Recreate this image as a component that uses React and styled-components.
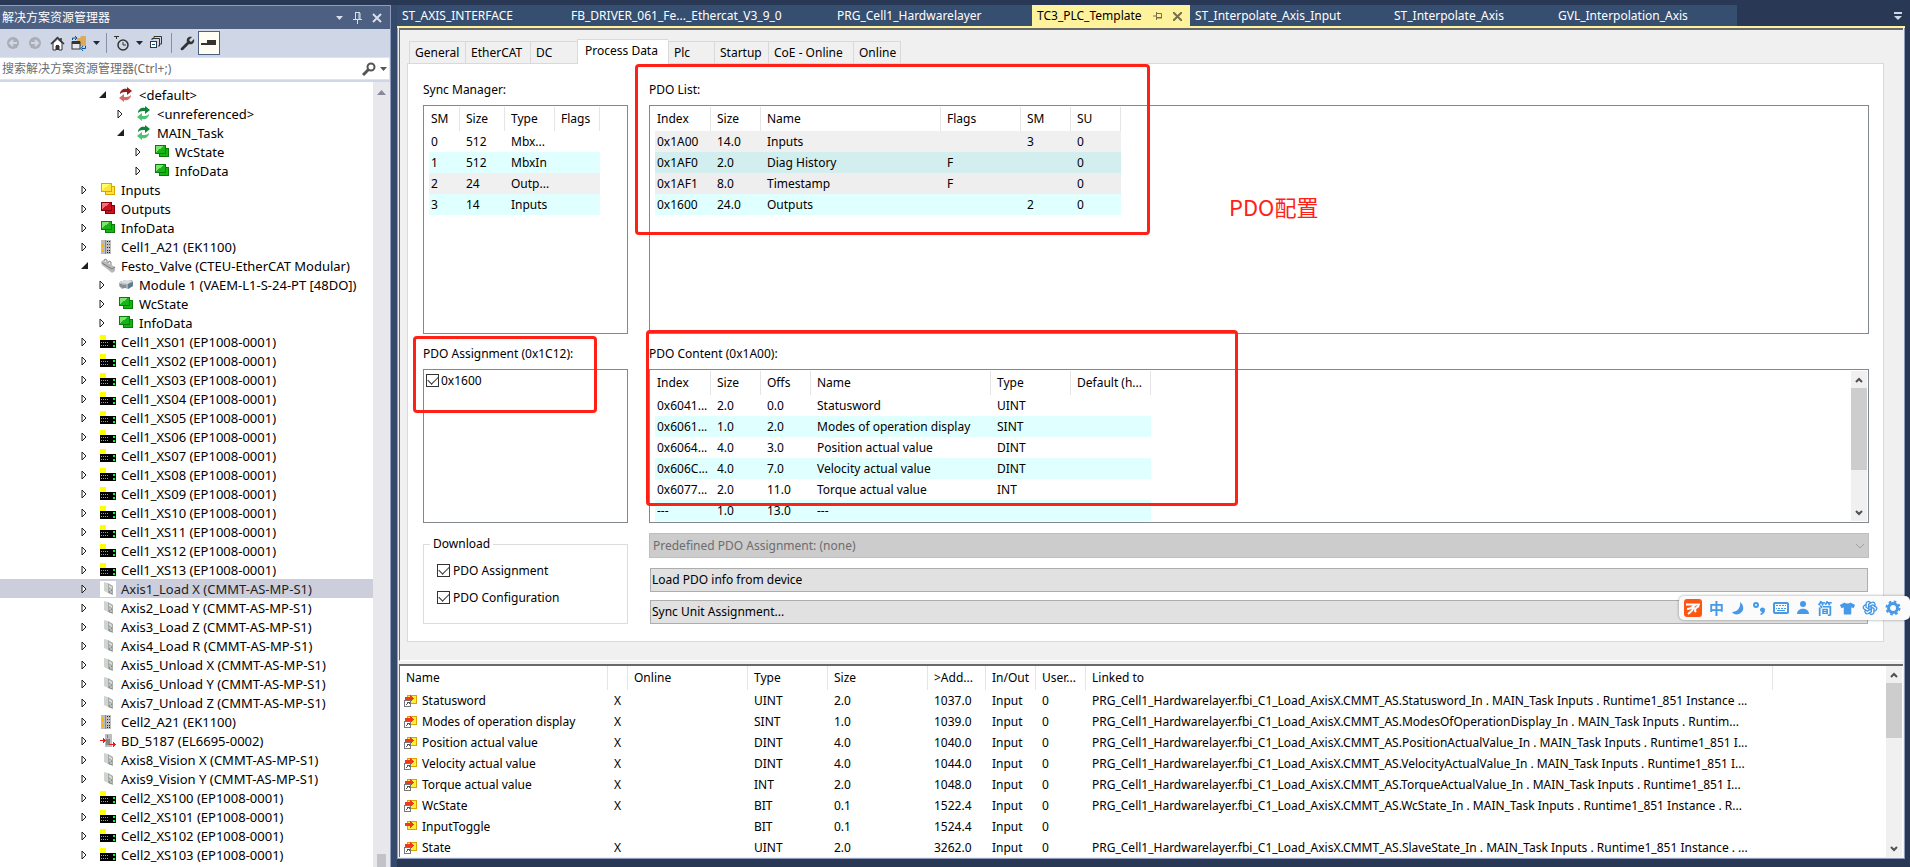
import React from "react";
import styled, { createGlobalStyle, css } from "styled-components";
import { FaTshirt } from "react-icons/fa";
import { TbBrandOpenai } from "react-icons/tb";

const tree = [
  { level: 1, icon: "taskRed", text: "<default>", open: true },
  { level: 2, icon: "taskGreen", text: "<unreferenced>" },
  { level: 2, icon: "taskGreen", text: "MAIN_Task", open: true },
  { level: 3, icon: "green", text: "WcState" },
  { level: 3, icon: "green", text: "InfoData" },
  { level: 0, icon: "yellow", text: "Inputs" },
  { level: 0, icon: "red", text: "Outputs" },
  { level: 0, icon: "green", text: "InfoData" },
  { level: 0, icon: "coupler", text: "Cell1_A21 (EK1100)" },
  { level: 0, icon: "valve", text: "Festo_Valve (CTEU-EtherCAT Modular)", open: true },
  { level: 1, icon: "module", text: "Module 1 (VAEM-L1-S-24-PT [48DO])" },
  { level: 1, icon: "green", text: "WcState" },
  { level: 1, icon: "green", text: "InfoData" },
  { level: 0, icon: "box", text: "Cell1_XS01 (EP1008-0001)" },
  { level: 0, icon: "box", text: "Cell1_XS02 (EP1008-0001)" },
  { level: 0, icon: "box", text: "Cell1_XS03 (EP1008-0001)" },
  { level: 0, icon: "box", text: "Cell1_XS04 (EP1008-0001)" },
  { level: 0, icon: "box", text: "Cell1_XS05 (EP1008-0001)" },
  { level: 0, icon: "box", text: "Cell1_XS06 (EP1008-0001)" },
  { level: 0, icon: "box", text: "Cell1_XS07 (EP1008-0001)" },
  { level: 0, icon: "box", text: "Cell1_XS08 (EP1008-0001)" },
  { level: 0, icon: "box", text: "Cell1_XS09 (EP1008-0001)" },
  { level: 0, icon: "box", text: "Cell1_XS10 (EP1008-0001)" },
  { level: 0, icon: "box", text: "Cell1_XS11 (EP1008-0001)" },
  { level: 0, icon: "box", text: "Cell1_XS12 (EP1008-0001)" },
  { level: 0, icon: "box", text: "Cell1_XS13 (EP1008-0001)" },
  { level: 0, icon: "drive", text: "Axis1_Load X (CMMT-AS-MP-S1)", selected: true },
  { level: 0, icon: "drive", text: "Axis2_Load Y (CMMT-AS-MP-S1)" },
  { level: 0, icon: "drive", text: "Axis3_Load Z (CMMT-AS-MP-S1)" },
  { level: 0, icon: "drive", text: "Axis4_Load R (CMMT-AS-MP-S1)" },
  { level: 0, icon: "drive", text: "Axis5_Unload X (CMMT-AS-MP-S1)" },
  { level: 0, icon: "drive", text: "Axis6_Unload Y (CMMT-AS-MP-S1)" },
  { level: 0, icon: "drive", text: "Axis7_Unload Z (CMMT-AS-MP-S1)" },
  { level: 0, icon: "coupler", text: "Cell2_A21 (EK1100)" },
  { level: 0, icon: "bridge", text: "BD_5187 (EL6695-0002)" },
  { level: 0, icon: "drive", text: "Axis8_Vision X (CMMT-AS-MP-S1)" },
  { level: 0, icon: "drive", text: "Axis9_Vision Y (CMMT-AS-MP-S1)" },
  { level: 0, icon: "box", text: "Cell2_XS100 (EP1008-0001)" },
  { level: 0, icon: "box", text: "Cell2_XS101 (EP1008-0001)" },
  { level: 0, icon: "box", text: "Cell2_XS102 (EP1008-0001)" },
  { level: 0, icon: "box", text: "Cell2_XS103 (EP1008-0001)" },
];

const docTabs = [
  { text: "ST_AXIS_INTERFACE", width: 169 },
  { text: "FB_DRIVER_061_Fe..._Ethercat_V3_9_0", width: 266 },
  { text: "PRG_Cell1_Hardwarelayer", width: 200 },
  { text: "TC3_PLC_Template", width: 158, active: true },
  { text: "ST_Interpolate_Axis_Input", width: 199 },
  { text: "ST_Interpolate_Axis", width: 164 },
  { text: "GVL_Interpolation_Axis", width: 184 },
];

const pageTabs = [
  { text: "General", width: 56 },
  { text: "EtherCAT", width: 65 },
  { text: "DC", width: 47 },
  { text: "Process Data", width: 91, active: true },
  { text: "Plc", width: 46 },
  { text: "Startup", width: 54 },
  { text: "CoE - Online", width: 85 },
  { text: "Online", width: 48 },
];

const syncManager = {
  widths: [31, 45, 50, 45],
  head: ["SM", "Size", "Type", "Flags"],
  rows: [
    { cells: ["0", "512", "Mbx...", ""] },
    { tone: "#e0ffff", cells: ["1", "512", "MbxIn", ""] },
    { tone: "#f0f0f0", cells: ["2", "24", "Outp...", ""] },
    { tone: "#e0ffff", cells: ["3", "14", "Inputs", ""] },
  ],
};

const pdoList = {
  widths: [56, 50, 180, 80, 50, 50],
  head: ["Index", "Size", "Name", "Flags", "SM", "SU"],
  rows: [
    { tone: "#f0f0f0", cells: ["0x1A00", "14.0", "Inputs", "", "3", "0"] },
    { tone: "#d2eeee", cells: ["0x1AF0", "2.0", "Diag History", "F", "", "0"] },
    { tone: "#eeeeee", cells: ["0x1AF1", "8.0", "Timestamp", "F", "", "0"] },
    { tone: "#e0ffff", cells: ["0x1600", "24.0", "Outputs", "", "2", "0"] },
  ],
};

const pdoContent = {
  widths: [56, 50, 50, 180, 80, 80],
  head: ["Index", "Size", "Offs", "Name", "Type", "Default (h..."],
  rows: [
    { cells: ["0x6041...", "2.0", "0.0", "Statusword", "UINT", ""] },
    { tone: "#e0ffff", cells: ["0x6061...", "1.0", "2.0", "Modes of operation display", "SINT", ""] },
    { cells: ["0x6064...", "4.0", "3.0", "Position actual value", "DINT", ""] },
    { tone: "#e0ffff", cells: ["0x606C...", "4.0", "7.0", "Velocity actual value", "DINT", ""] },
    { cells: ["0x6077...", "2.0", "11.0", "Torque actual value", "INT", ""] },
    { tone: "#e0ffff", cells: ["---", "1.0", "13.0", "---", "", ""] },
  ],
};

const link = "PRG_Cell1_Hardwarelayer.fbi_C1_Load_AxisX.CMMT_AS.";

const variables = {
  widths: [208, 20, 120, 80, 100, 58, 50, 50, 687],
  head: ["Name", "", "Online", "Type", "Size", ">Add...", "In/Out", "User...", "Linked to"],
  rows: [
    ["Statusword", "X", "", "UINT", "2.0", "1037.0", "Input", "0", link + "Statusword_In . MAIN_Task Inputs . Runtime1_851 Instance ..."],
    ["Modes of operation display", "X", "", "SINT", "1.0", "1039.0", "Input", "0", link + "ModesOfOperationDisplay_In . MAIN_Task Inputs . Runtim..."],
    ["Position actual value", "X", "", "DINT", "4.0", "1040.0", "Input", "0", link + "PositionActualValue_In . MAIN_Task Inputs . Runtime1_851 I..."],
    ["Velocity actual value", "X", "", "DINT", "4.0", "1044.0", "Input", "0", link + "VelocityActualValue_In . MAIN_Task Inputs . Runtime1_851 I..."],
    ["Torque actual value", "X", "", "INT", "2.0", "1048.0", "Input", "0", link + "TorqueActualValue_In . MAIN_Task Inputs . Runtime1_851 I..."],
    ["WcState", "X", "", "BIT", "0.1", "1522.4", "Input", "0", link + "WcState_In . MAIN_Task Inputs . Runtime1_851 Instance . R..."],
    ["InputToggle", "", "", "BIT", "0.1", "1524.4", "Input", "0", ""],
    ["State", "X", "", "UINT", "2.0", "3262.0", "Input", "0", link + "SlaveState_In . MAIN_Task Inputs . Runtime1_851 Instance . ..."],
  ].map((cells) => ({ cells, linked: cells[1] === "X" })),
};

const imageColors = {
  green: ["#7ee36f", "#16b516", "#0a7a0a"],
  yellow: ["#ffff66", "#ffe23c", "#d9a800"],
  red: ["#f2707a", "#cc1020", "#86000c"],
};

function ImageIcon({ kind }) {
  const [light, fill, line] = imageColors[kind];
  return (
    <svg width="16" height="16" viewBox="0 0 16 16" shapeRendering="crispEdges">
      <rect x="5.500" y="4.500" width="9" height="8" fill={fill} stroke={line} />
      <rect x="1.500" y="1.500" width="10" height="8" fill={fill} stroke={line} />
      <path d="M2 2h8l-8 6z" fill={light} />
    </svg>
  );
}

function TaskIcon({ kind }) {
  const red = kind === "taskRed";
  const dark = red ? "#8e2222" : "#14813a";
  const light = red ? "#d96a6a" : "#4cc274";
  return (
    <svg width="16" height="16" viewBox="0 0 16 16">
      <path d="M2 7c0-4 4-6 7-5V0l5 4-5 4V5C7 5 4 5 2 7z" fill={dark} />
      <path d="M13 8c0 4-4 6-7 5v2l-5-4 5-4v3c3 0 5 0 7-2z" fill={light} />
    </svg>
  );
}

function NodeIcon({ kind }) {
  if (imageColors[kind]) return <ImageIcon kind={kind} />;
  if (kind === "taskRed" || kind === "taskGreen") return <TaskIcon kind={kind} />;
  if (kind === "coupler")
    return (
      <svg width="16" height="16" viewBox="0 0 16 16" shapeRendering="crispEdges">
        <path d="M1 1h4v14H1zM6 1h5v14H6z" fill="#bdbdbd" />
        <path d="M5 1h1v14H5z" fill="#8a8a8a" />
        <path d="M2 4h2v4H2zM2 10h2v3H2z" fill="#ffb400" />
        <path d="M7 2h1v1H7zM9 2h1v1H9zM7 8h1v1H7zM9 8h1v1H9zM7 11h1v1H7zM9 11h1v1H9zM7 13h1v1H7zM9 13h1v1H9z" fill="#222" />
        <path d="M7 5h1v1H7z" fill="#d00" />
        <path d="M9 5h1v1H9z" fill="#0a0" />
      </svg>
    );
  if (kind === "valve")
    return (
      <svg width="16" height="16" viewBox="0 0 16 16">
        <path d="M1 4l2-2 12 7v4l-3 2L2 7z" fill="#b9b9b9" />
        <path d="M2 5l10 6 3-2" fill="none" stroke="#777" />
        <path d="M4 3l1-2 2 1v3M8 5l1-2 2 1v3" fill="#e3e3e3" stroke="#8a8a8a" />
      </svg>
    );
  if (kind === "module")
    return (
      <svg width="16" height="16" viewBox="0 0 16 16">
        <path d="M1 6l2-2h2l1-1 3 1 5-1 1 2v4l-5 3-3-1-3 1-3-3z" fill="#a9afb3" />
        <path d="M1 6l5-3 8 1-4 3z" fill="#d8dcde" />
        <path d="M10 7l5-2v4l-5 3z" fill="#5e7d8c" />
        <path d="M3 7v3M5 8v3M7 8v3" stroke="#6d6d6d" />
      </svg>
    );
  if (kind === "drive")
    return (
      <svg width="16" height="16" viewBox="0 0 16 16">
        <path d="M4 1l4 1v10l-4-2z" fill="#d0d4d0" />
        <path d="M8 2l5 3v9l-5-2z" fill="#a6aba6" />
        <path d="M9 4l3 2v2L9 6z" fill="#dfe3df" />
        <path d="M9 8l3 1v4l-3-1z" fill="#858a85" />
        <path d="M9 9h2M10 11h2" stroke="#eee" />
      </svg>
    );
  if (kind === "bridge")
    return (
      <svg width="16" height="16" viewBox="0 0 16 16" shapeRendering="crispEdges">
        <path d="M5 1h7v13H5z" fill="#bdbdbd" />
        <path d="M7 2h1v3H7z" fill="#1cc41c" />
        <path d="M6 6h4v6H6z" fill="#858585" />
        <path d="M0 7h3V5l3 2.500L3 10V8H0zM9 11h4V9l3 2.500-3 2.500v-2H9z" fill="#f01818" />
      </svg>
    );
  return (
    <svg width="16" height="16" viewBox="0 0 16 16" shapeRendering="crispEdges">
      <path d="M0 1h6v5H0z" fill="#ffff00" />
      <path d="M0 6h16v8H0z" fill="#000" />
      <path d="M1 8h1v1H1zM3 8h1v1H3zM5 8h1v1H5zM7 8h1v1H7zM1 11h1v1H1zM3 11h1v1H3zM5 11h1v1H5zM7 11h1v1H7z" fill="#35e835" />
      <path d="M13 7h2v2h-2zM13 11h2v2h-2z" fill="#00ff40" />
    </svg>
  );
}

function VariableIcon({ linked }) {
  return (
    <svg width="14" height="14" viewBox="0 0 14 14" shapeRendering="crispEdges">
      <rect x="3.500" y="1.500" width="9" height="8" fill="#ffee3a" stroke="#d9a400" />
      <path d="M1 3h5V1l4 3.500L6 8V6H1z" fill="#ee3a1c" />
      {linked && (
        <g>
          <rect x=".5" y="6.500" width="6" height="6" fill="#fff" stroke="#777" />
          <path d="M2 11l3-3M3 8h2v2" fill="none" stroke="#555" />
        </g>
      )}
    </svg>
  );
}

function Chevron({ up }) {
  return (
    <svg width="8" height="6" viewBox="0 0 8 6">
      <path d={up ? "M1 5l3-3 3 3" : "M1 1l3 3 3-3"} fill="none" stroke="#505050" strokeWidth="2" />
    </svg>
  );
}

function Caret() {
  return (
    <svg width="7" height="4" viewBox="0 0 7 4">
      <path d="M0 0h7L3.500 4z" fill="currentColor" />
    </svg>
  );
}

function SideHeader() {
  return (
    <>
      <SideTitle>
        <h2>解决方案资源管理器</h2>
        <button aria-label="Window position"><Caret /></button>
        <button aria-label="Auto hide">
          <svg width="9" height="12" viewBox="0 0 9 12" fill="none" stroke="currentColor">
            <path d="M2 .5h5M2.500 1v6M6 1v6M7 1v6M0 7.500h9M4.500 8v4" />
          </svg>
        </button>
        <button aria-label="Close">
          <svg width="10" height="10" viewBox="0 0 10 10" fill="none" stroke="currentColor" strokeWidth="2">
            <path d="M1 1l8 8M9 1L1 9" />
          </svg>
        </button>
      </SideTitle>
      <Toolbar>
        <ToolButton aria-label="Back">
          <svg width="14" height="14" viewBox="0 0 14 14">
            <circle cx="7" cy="7" r="6" fill="#a9adb8" />
            <path d="M11 7H4M7 4L4 7l3 3" fill="none" stroke="#cfd6e5" strokeWidth="2" />
          </svg>
        </ToolButton>
        <ToolButton aria-label="Forward">
          <svg width="14" height="14" viewBox="0 0 14 14">
            <circle cx="7" cy="7" r="6" fill="#a9adb8" />
            <path d="M3 7h7M7 4l3 3-3 3" fill="none" stroke="#cfd6e5" strokeWidth="2" />
          </svg>
        </ToolButton>
        <ToolButton aria-label="Home">
          <svg width="15" height="15" viewBox="0 0 15 15">
            <path d="M3 7v7h3v-4h3v4h3V7L7.500 3z" fill="#fff" stroke="#333" />
            <path d="M6 9h3v5H6z" fill="#333" />
            <path d="M1 8l6.500-6.500L14 8M11 2v3" fill="none" stroke="#333" strokeWidth="1.500" />
          </svg>
        </ToolButton>
        <ToolButton aria-label="Sync with active document">
          <svg width="16" height="15" viewBox="0 0 16 15">
            <path d="M6 2h3l1-2h5v10H6z" fill="#dcaa5a" />
            <rect x="1" y="6" width="8" height="7" fill="#e6e9f0" stroke="#333" />
            <path d="M1 5h8v3H1z" fill="#333" />
            <path d="M1.500 4V2H5M4 0l2 2-2 2M14.500 10v2.500H11M12 10l-2 2.500 2 2.500" fill="none" stroke="#00539c" />
          </svg>
        </ToolButton>
        <ToolButton $narrow aria-label="More views"><Caret /></ToolButton>
        <Separator />
        <ToolButton aria-label="Pending changes filter">
          <svg width="16" height="15" viewBox="0 0 16 15" fill="none" stroke="#333">
            <path d="M0 .5h5M2.500 1v2" />
            <circle cx="9" cy="9" r="5" strokeWidth="1.500" />
            <path d="M9 6v3h3" />
          </svg>
        </ToolButton>
        <ToolButton $narrow aria-label="Filter options"><Caret /></ToolButton>
        <ToolButton aria-label="Collapse all">
          <svg width="14" height="14" viewBox="0 0 14 14" fill="none" stroke="#333">
            <path d="M5 2V.5h7.500V8H11M3 4V2.500h7.500V10H9" />
            <rect x="1.500" y="5.500" width="6" height="6" fill="#fff" />
            <path d="M3 8.500h3" stroke="#00539c" />
          </svg>
        </ToolButton>
        <Separator />
        <ToolButton aria-label="Properties">
          <svg width="15" height="15" viewBox="0 0 15 15">
            <path d="M1 12l6-6c-1-3 1-6 5-5L9 4l2 2 3-3c1 4-2 6-5 5l-6 6c-2 1-3-1-2-2z" fill="#333" />
          </svg>
        </ToolButton>
        <ToolButton $pressed aria-label="Preview selected items">
          <svg width="16" height="8" viewBox="0 0 16 8">
            <path d="M0 4h6v2H0zM6 1h9v5H6z" fill="#333" />
          </svg>
        </ToolButton>
      </Toolbar>
      <Search>
        <input type="text" placeholder="搜索解决方案资源管理器(Ctrl+;)" aria-label="搜索解决方案资源管理器" />
        <svg width="14" height="14" viewBox="0 0 14 14" fill="none" stroke="#555">
          <circle cx="9" cy="5" r="3.500" strokeWidth="2" />
          <path d="M7 7l-6 6" strokeWidth="3" />
        </svg>
        <Caret />
      </Search>
    </>
  );
}

function SolutionExplorer() {
  return (
    <Sidebar>
      <SideHeader />
      <TreeArea>
        <Tree>
          {tree.map((node, i) => (
            <TreeRow key={i} $level={node.level} $selected={node.selected}>
              <Twisty>
                {node.open ? (
                  <svg width="7" height="7" viewBox="0 0 7 7"><path d="M7 0v7H0z" fill="#1e1e1e" /></svg>
                ) : (
                  <svg width="6" height="10" viewBox="0 0 6 10"><path d="M1 1l4 4-4 4z" fill="#fff" stroke="#1e1e1e" /></svg>
                )}
              </Twisty>
              <NodeMark $selected={node.selected}><NodeIcon kind={node.icon} /></NodeMark>
              <span>{node.text}</span>
            </TreeRow>
          ))}
        </Tree>
        <TreeScroll>
          <svg width="9" height="5" viewBox="0 0 9 5"><path d="M4.500 0L9 5H0z" fill="#868999" /></svg>
          <i />
        </TreeScroll>
      </TreeArea>
    </Sidebar>
  );
}

function DataTable({ data, label, icons }) {
  return (
    <Table aria-label={label} $wide={icons}>
      <colgroup>
        {data.widths.map((w, i) => (
          <Col key={i} $w={w} />
        ))}
      </colgroup>
      <thead>
        <tr>
          {data.head.map((h, i) => (
            <th key={i} scope="col">{h}</th>
          ))}
        </tr>
      </thead>
      <tbody>
        {data.rows.map((row, i) => (
          <Row key={i} $tone={row.tone}>
            {row.cells.map((c, j) =>
              icons && j === 0 ? (
                <td key={j}><Variable><VariableIcon linked={row.linked} />{c}</Variable></td>
              ) : (
                <td key={j}>{c}</td>
              )
            )}
          </Row>
        ))}
      </tbody>
    </Table>
  );
}

function ScrollBar({ size }) {
  return (
    <Scroll>
      <button aria-label="Scroll up"><Chevron up /></button>
      <Thumb $size={size} />
      <button aria-label="Scroll down"><Chevron /></button>
    </Scroll>
  );
}

function ProcessData() {
  return (
    <Panel>
      <Section>
        <Label>Sync Manager:</Label>
        <ListBox $height={229}>
          <DataTable data={syncManager} label="Sync Manager" />
        </ListBox>
      </Section>
      <Section>
        <Label>PDO List:</Label>
        <ListBox $height={229}>
          <DataTable data={pdoList} label="PDO List" />
        </ListBox>
        <Callout $left={-14} $top={-16} $width={515} $height={171} />
        <Note>PDO配置</Note>
      </Section>
      <Section>
        <Label>PDO Assignment (0x1C12):</Label>
        <ListBox $height={154}>
          <Check $tight>
            <input type="checkbox" defaultChecked />
            0x1600
          </Check>
        </ListBox>
        <Callout $left={-10} $top={-8} $width={184} $height={77} />
      </Section>
      <Section>
        <Label>PDO Content (0x1A00):</Label>
        <ListBox $height={154}>
          <DataTable data={pdoContent} label="PDO Content" />
          <ScrollBar size={82} />
        </ListBox>
        <Callout $left={-3} $top={-14} $width={592} $height={176} />
      </Section>
      <Group>
        <legend>Download</legend>
        <Check>
          <input type="checkbox" defaultChecked />
          PDO Assignment
        </Check>
        <Check>
          <input type="checkbox" defaultChecked />
          PDO Configuration
        </Check>
      </Group>
      <Actions>
        <SelectBox>
          <select disabled aria-label="Predefined PDO Assignment">
            <option>Predefined PDO Assignment: (none)</option>
          </select>
          <svg width="10" height="6" viewBox="0 0 10 6">
            <path d="M1 1l4 4 4-4" fill="none" stroke="#a0a0a0" />
          </svg>
        </SelectBox>
        <WideButton>Load PDO info from device</WideButton>
        <WideButton>Sync Unit Assignment...</WideButton>
      </Actions>
    </Panel>
  );
}

function InputMethodBar() {
  return (
    <ImeBar>
      <svg width="18" height="18" viewBox="0 0 18 18">
        <rect width="18" height="18" rx="3" fill="#ff5512" />
        <path d="M2 5.500h14M11 6c-2 2-5 4-8 4M10 8c-1 3-3 5-6 7M15 7c-4 2-5 4-3 6" fill="none" stroke="#fff" strokeWidth="2" />
      </svg>
      <span>中</span>
      <svg width="14" height="14" viewBox="0 0 14 14">
        <path d="M9 1c5 4 4 10-1 12-3 1-6 0-7-2 5 0 9-4 8-10z" fill="currentColor" />
      </svg>
      <svg width="14" height="14" viewBox="0 0 14 14">
        <circle cx="4" cy="4" r="2" fill="none" stroke="currentColor" strokeWidth="2" />
        <path d="M8 9a2 2 0 1 1 5 0c0 3-2 4-4 5l-1-1c1-1 2-1 2-2-1 0-2-1-2-2z" fill="currentColor" />
      </svg>
      <svg width="16" height="14" viewBox="0 0 16 14">
        <rect x="1" y="2" width="14" height="10" rx="1" fill="none" stroke="currentColor" strokeWidth="2" />
        <path d="M3 4.500h2M6 4.500h2M9 4.500h2M12 4.500h1M3 7.500h1M5 7.500h2M8 7.500h2M11 7.500h2M4 9.500h8" stroke="currentColor" />
      </svg>
      <svg width="14" height="14" viewBox="0 0 14 14" fill="currentColor">
        <circle cx="7" cy="3" r="3" />
        <path d="M1 13c0-7 12-7 12 0z" />
      </svg>
      <span>简</span>
      <FaTshirt size={15} />
      <TbBrandOpenai size={16} />
      <svg width="16" height="16" viewBox="0 0 16 16" fill="none" stroke="currentColor">
        <circle cx="8" cy="8" r="4.500" strokeWidth="3" />
        <circle cx="8" cy="8" r="6.500" strokeWidth="2" strokeDasharray="2.600 2.500" />
      </svg>
    </ImeBar>
  );
}

function App() {
  return (
    <Page>
      <GlobalStyle />
      <SolutionExplorer />
      <Main>
        <DocTabs>
          {docTabs.map((t) => (
            <DocTab key={t.text} $width={t.width} $active={t.active}>
              {t.text}
              {t.active && (
                <>
                  <svg width="9" height="8" viewBox="0 0 9 8" fill="none" stroke="currentColor">
                    <path d="M0 4h3M3.500 0v8M4 1.500h4.500v4M4 5.500h5M4 6h5" />
                  </svg>
                  <svg width="9" height="9" viewBox="0 0 9 9" fill="none" stroke="currentColor" strokeWidth="2">
                    <path d="M0 0l9 9M9 0L0 9" />
                  </svg>
                </>
              )}
            </DocTab>
          ))}
          <TabMenu aria-label="Open documents">
            <svg width="8" height="8" viewBox="0 0 8 8"><path d="M0 0h8v2H0zM0 4h8L4 8z" fill="currentColor" /></svg>
          </TabMenu>
        </DocTabs>
        <Document>
          <Upper>
            <PageTabs>
              {pageTabs.map((t) => (
                <PageTab key={t.text} $width={t.width} $active={t.active}>{t.text}</PageTab>
              ))}
            </PageTabs>
            <ProcessData />
          </Upper>
          <Lower>
            <DataTable data={variables} label="Variables" icons />
            <ScrollBar size={55} />
          </Lower>
        </Document>
      </Main>
      <InputMethodBar />
    </Page>
  );
}

const GlobalStyle = createGlobalStyle`
  * {
    box-sizing: border-box;
  }
  body {
    margin: 0;
    background: #293955;
    color: #000;
    font-family: "Noto Sans", "Noto Sans CJK SC", sans-serif;
    font-size: 12px;
    line-height: 16px;
  }
  button, input, select {
    font: inherit;
    color: inherit;
  }
  button {
    padding: 0;
    border: 0;
    background: none;
  }
`;

const Page = styled.div`
  display: flex;
  height: 100vh;
  padding-top: 5px;
  overflow: hidden;
  background: #293955;
`;

const Sidebar = styled.aside`
  flex: 0 0 391px;
  display: flex;
  flex-direction: column;
  background: #cfd6e5;
  border-top: 1px solid #8e9bbc;
  border-right: 1px solid #8e9bbc;
`;

const SideTitle = styled.div`
  display: flex;
  align-items: center;
  height: 23px;
  padding: 0 8px 0 2px;
  gap: 10px;
  background: #4d6082;
  color: #fff;
  h2 {
    flex: 1;
    margin: 0;
    font-size: 12px;
    font-weight: 400;
  }
  button {
    display: flex;
    color: #d8deea;
  }
`;

const Toolbar = styled.div`
  display: flex;
  align-items: center;
  height: 28px;
  padding-left: 2px;
`;

const ToolButton = styled.button`
  display: flex;
  align-items: center;
  justify-content: center;
  width: ${(p) => (p.$narrow ? "12px" : "22px")};
  height: 24px;
  color: #1b293e;
  ${(p) =>
    p.$pressed &&
    css`
      background: #fffcf4;
      border: 1px solid #4d6082;
    `}
`;

const Separator = styled.div`
  width: 1px;
  height: 20px;
  margin: 0 4px;
  background: #8591a9;
`;

const Search = styled.div`
  display: flex;
  align-items: center;
  gap: 4px;
  height: 23px;
  margin-bottom: 2px;
  padding-right: 2px;
  background: #fff;
  border: 1px solid #dfe3ec;
  border-left: 0;
  color: #555;
  input {
    flex: 1;
    min-width: 0;
    padding: 0 2px;
    border: 0;
    outline: 0;
    background: none;
  }
  input::placeholder {
    color: #6d6d6d;
  }
`;

const TreeArea = styled.div`
  flex: 1;
  display: flex;
  min-height: 0;
  background: #fff;
`;

const Tree = styled.ul`
  flex: 1;
  margin: 0;
  padding: 3px 0 0;
  list-style: none;
  font-size: 13px;
  overflow: hidden;
`;

const TreeRow = styled.li`
  display: flex;
  align-items: center;
  height: 19px;
  padding-left: ${(p) => 80 + p.$level * 18}px;
  background: ${(p) => (p.$selected ? "#cccedb" : "transparent")};
  color: ${(p) => (p.$selected ? "#222" : "#000")};
  white-space: nowrap;
`;

const Twisty = styled.span`
  display: flex;
  width: 20px;
  padding-left: 1px;
`;

const NodeMark = styled.span`
  display: flex;
  width: 16px;
  margin-right: 5px;
  background: ${(p) => (p.$selected ? "#fff" : "transparent")};
`;

const TreeScroll = styled.div`
  display: flex;
  flex-direction: column;
  align-items: center;
  justify-content: space-between;
  width: 17px;
  padding-top: 8px;
  background: #e8e8ec;
  i {
    width: 9px;
    height: 13px;
    background: #c2c3c9;
  }
`;

const Main = styled.main`
  flex: 1;
  display: flex;
  flex-direction: column;
  min-width: 0;
  padding: 0 5px 8px 0;
  border-left: 6px solid #35496a;
`;

const DocTabs = styled.div`
  display: flex;
  height: 23px;
  border-bottom: 2px solid #fff29d;
`;

const DocTab = styled.button`
  display: flex;
  align-items: center;
  gap: 11px;
  flex: 0 1 ${(p) => p.$width}px;
  padding: 1px 7px 0 5px;
  background: ${(p) => (p.$active ? "#fff29d" : "#364e6f")};
  color: ${(p) => (p.$active ? "#000" : "#fff")};
  white-space: nowrap;
  svg {
    flex: none;
    color: #75704a;
  }
`;

const TabMenu = styled.button`
  margin-left: auto;
  padding-right: 3px;
  color: #cfd6e5;
`;

const Document = styled.div`
  flex: 1;
  display: flex;
  flex-direction: column;
  min-height: 0;
  background: #f0f0f0;
  border: 1px solid #8e9bbc;
  border-top: 0;
  padding: 0 1px 1px;
`;

const Upper = styled.div`
  padding: 9px 19px 18px 7px;
  border-top: 2px solid #696969;
  border-left: 1px solid #696969;
  border-bottom: 1px solid #fff;
  margin-bottom: 3px;
`;

const PageTabs = styled.div`
  display: flex;
  align-items: flex-end;
  height: 24px;
  padding-left: 2px;
`;

const PageTab = styled.button`
  width: ${(p) => p.$width}px;
  height: 22px;
  padding-left: 5px;
  background: #f0f0f0;
  border: 1px solid #d9d9d9;
  border-bottom: 0;
  border-right: 0;
  text-align: left;
  white-space: nowrap;
  &:last-child {
    border-right: 1px solid #d9d9d9;
  }
  ${(p) =>
    p.$active &&
    css`
      z-index: 1;
      height: 25px;
      margin-bottom: -1px;
      padding: 0 0 2px 7px;
      background: #fff;
    `}
`;

const Panel = styled.div`
  display: grid;
  grid-template-columns: 205px minmax(0, 1fr);
  gap: 10px 21px;
  padding: 16px 14px 17px 15px;
  background: #fff;
  border: 1px solid #d9d9d9;
`;

const Section = styled.section`
  position: relative;
  display: flex;
  flex-direction: column;
  gap: 5px;
`;

const Label = styled.div`
  line-height: 20px;
`;

const ListBox = styled.div`
  display: flex;
  justify-content: space-between;
  align-items: flex-start;
  height: ${(p) => p.$height}px;
  padding: 1px 1px 1px 5px;
  border: 1px solid #828790;
  overflow: hidden;
`;

const Table = styled.table`
  table-layout: fixed;
  width: 1px;
  border-collapse: collapse;
  th,
  td {
    height: 21px;
    padding: 0 0 0 6px;
    font-weight: 400;
    text-align: left;
    white-space: nowrap;
    overflow: hidden;
  }
  th {
    height: 24px;
    background: linear-gradient(#e5e5e5, #e5e5e5) right / 1px 100% no-repeat;
  }
  th:first-child {
    padding-left: ${(p) => (p.$wide ? "6px" : "2px")};
  }
  td:first-child {
    padding-left: ${(p) => (p.$wide ? "4px" : "2px")};
  }
`;

const Col = styled.col`
  width: ${(p) => p.$w}px;
`;

const Row = styled.tr`
  background: ${(p) => p.$tone || "transparent"};
`;

const Variable = styled.span`
  display: flex;
  align-items: center;
  gap: 4px;
`;

const Scroll = styled.div`
  align-self: stretch;
  display: flex;
  flex-direction: column;
  flex: 0 0 16px;
  background: #f0f0f0;
  button {
    display: flex;
    align-items: center;
    justify-content: center;
    height: 17px;
  }
  button:last-child {
    margin-top: auto;
  }
`;

const Thumb = styled.div`
  height: ${(p) => p.$size}px;
  background: #cdcdcd;
`;

const Check = styled.label`
  display: flex;
  align-items: center;
  gap: ${(p) => (p.$tight ? "2px" : "3px")};
  height: 19px;
  margin-left: ${(p) => (p.$tight ? "-3px" : "0")};
  input {
    appearance: none;
    display: grid;
    place-items: center;
    width: 13px;
    height: 13px;
    margin: 0;
    border: 1px solid #333;
    background: #fff;
  }
  input:checked::after {
    content: "";
    width: 9px;
    height: 5px;
    margin-bottom: 3px;
    border-left: 1px solid #333;
    border-bottom: 1px solid #333;
    transform: rotate(-45deg);
  }
`;

const Group = styled.fieldset`
  display: flex;
  flex-direction: column;
  gap: 8px;
  min-width: 0;
  height: 89px;
  margin: 2px 0 0;
  padding: 8px 13px 0;
  border: 1px solid #dcdcdc;
  legend {
    margin-left: -7px;
    padding: 0 3px;
    line-height: 18px;
  }
`;

const Actions = styled.div`
  display: flex;
  flex-direction: column;
`;

const SelectBox = styled.div`
  position: relative;
  margin-bottom: 10px;
  select {
    display: block;
    width: 100%;
    height: 25px;
    padding: 0 3px;
    appearance: none;
    background: #cccccc;
    border: 1px solid #bfbfbf;
    border-radius: 0;
    color: #6d6d6d;
    opacity: 1;
  }
  svg {
    position: absolute;
    right: 4px;
    top: 10px;
  }
`;

const WideButton = styled.button`
  height: 24px;
  margin: 0 1px 8px;
  padding-left: 1px;
  background: #e1e1e1;
  border: 1px solid #adadad;
  text-align: left;
  &:last-child {
    margin-bottom: 0;
  }
`;

// red marker drawn over the lists
const Callout = styled.div`
  position: absolute;
  z-index: 2;
  left: ${(p) => p.$left}px;
  top: ${(p) => p.$top}px;
  width: ${(p) => p.$width}px;
  height: ${(p) => p.$height}px;
  border: 3px solid #ff2116;
  border-radius: 4px;
  pointer-events: none;
`;

const Note = styled.div`
  position: absolute;
  left: 580px;
  top: 110px;
  color: #ff2116;
  font-family: "Noto Sans CJK SC", sans-serif;
  font-size: 22px;
  line-height: 32px;
`;

const Lower = styled.div`
  flex: 1;
  display: flex;
  justify-content: space-between;
  align-items: flex-start;
  min-height: 0;
  padding-right: 1px;
  overflow: hidden;
  background: #fff;
  border-top: 2px solid #696969;
  border-left: 1px solid #696969;
`;

const ImeBar = styled.div`
  position: fixed;
  z-index: 3;
  right: 0;
  top: 596px;
  display: flex;
  align-items: center;
  justify-content: space-between;
  width: 231px;
  height: 24px;
  padding: 0 9px 0 5px;
  background: #fbfbfb;
  border-radius: 5px;
  box-shadow: 0 0 3px rgba(0, 0, 0, 0.4);
  color: #4698e8;
  font-size: 15px;
  font-weight: 700;
`;

export default App;
